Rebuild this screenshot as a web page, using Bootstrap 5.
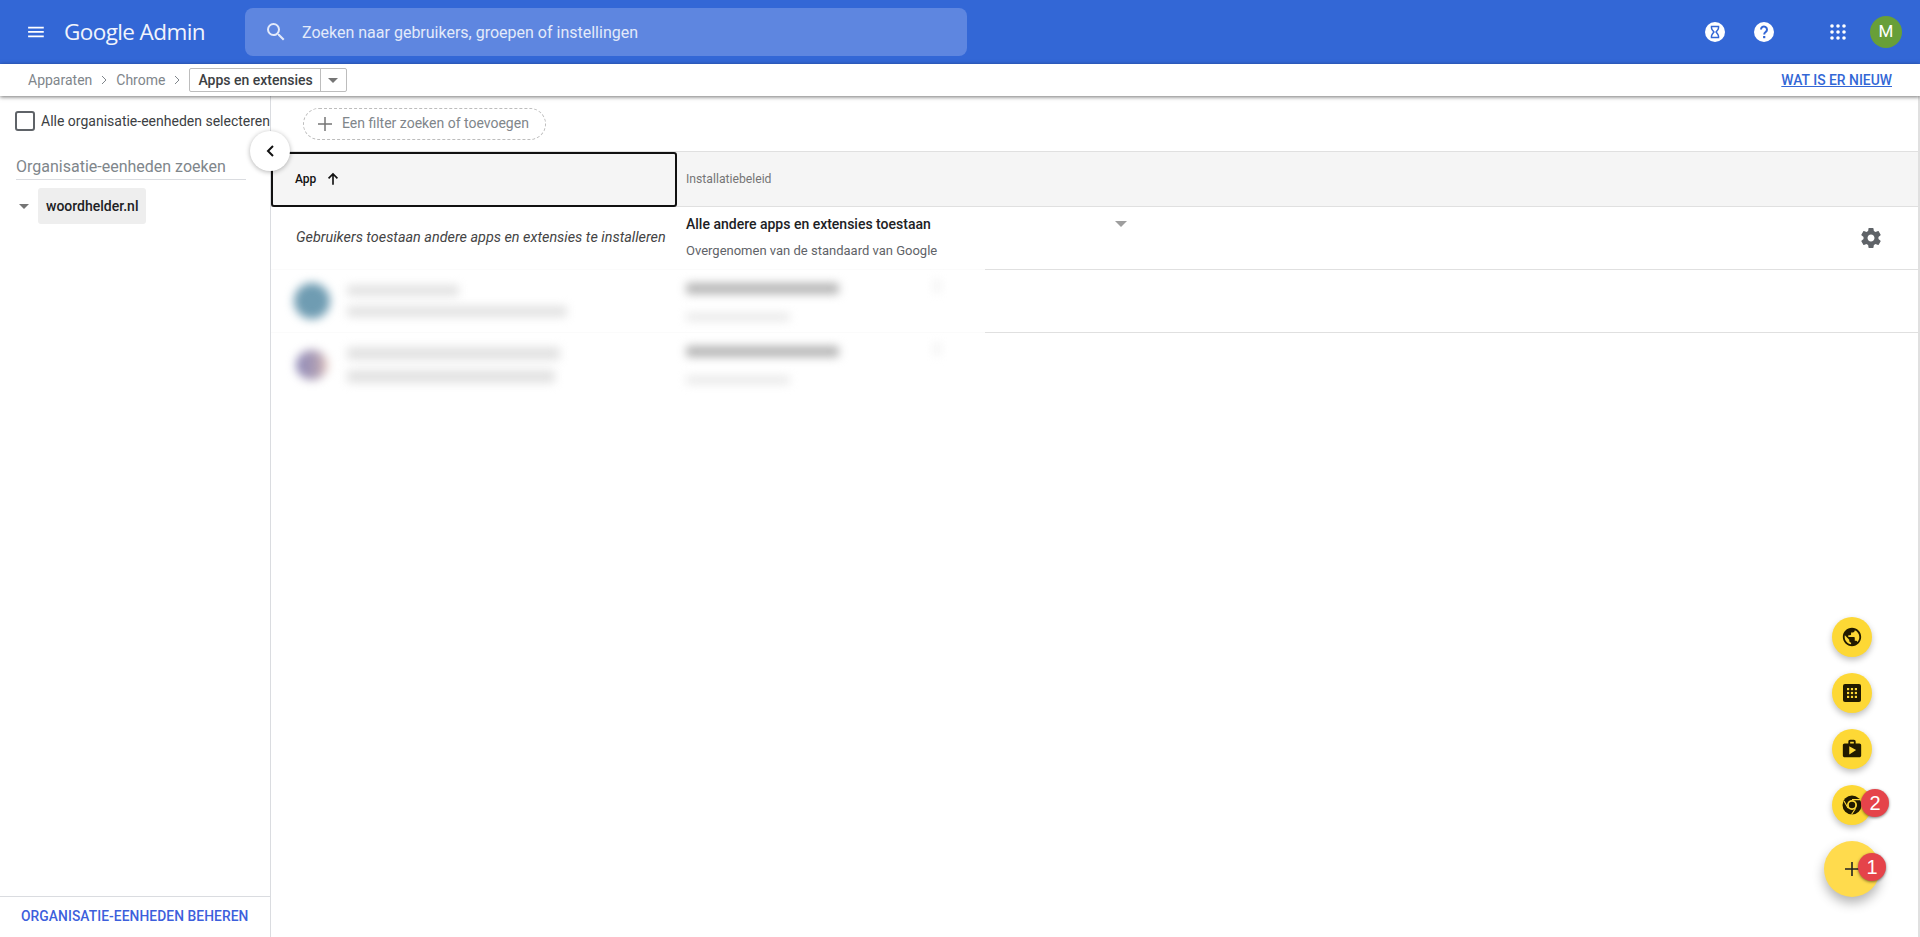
<!DOCTYPE html>
<html lang="nl">
<head>
<meta charset="utf-8">
<title>Google Admin</title>
<link href="https://cdn.jsdelivr.net/npm/bootstrap@5.3.0/dist/css/bootstrap.min.css" rel="stylesheet">
<style>
html,body{height:937px;overflow:hidden}
body{font-family:Roboto,"Liberation Sans",sans-serif;background:#fff;color:#202124}
.topbar{height:64px;background:#3367d6;color:#fff}
.menu-btn{width:64px;flex:none}
.brand{font-family:"Open Sans",Roboto,sans-serif;font-size:22.5px;width:181px;letter-spacing:-.6px;color:#f1f4fc;flex:none}
.searchbox{width:722px;height:48px;background:#5e86e0;border-radius:8px;color:#e3eafa;font-size:16px;flex:none}
.searchbox span{padding-top:1px}
.searchbox svg{margin:0 14px 0 19px}
.top-actions{margin-right:18px}
.act-a{margin-right:29px}.act-b{margin-right:56px}.act-c{margin-right:24px}
.avatar{width:32px;height:32px;background:#689f38;color:#fff;font-size:17px}
.subbar{height:32px;background:#fff;box-shadow:0 1px 4px rgba(0,0,0,.55);position:relative;z-index:2;padding-left:28px;font-size:14px;color:#80868b}
.sep{margin:0 9px;font-size:13px}
.crumb-box{height:24px;border:1px solid #bdbdbd;border-radius:2px;color:#3c4043;font-weight:500;font-size:14px}
.crumb-label{padding:0 7px 0 8px;border-right:1px solid #bdbdbd;height:100%}
.crumb-caret{width:25px;position:relative}
.tri{width:0;height:0;border-left:5px solid transparent;border-right:5px solid transparent;border-top:5px solid #757575;display:block}
.whatsnew{margin-right:28px;color:#3367d6;font-size:13.9px;font-weight:500;padding-top:1px}
.workarea{height:841px;position:relative}
.sidepane{width:271px;flex:none;border-right:1px solid #dadce0;height:841px}
.select-all{padding:15px 0 0 15px;font-size:14px;color:#3c4043;white-space:nowrap;height:55px}
.box-check{width:20px;height:20px;border:2px solid #5f6368;border-radius:3px;margin-right:6px;flex:none}
.ou-search{margin:0 24px 0 16px;height:29px;border-bottom:1px solid #dadce0;color:#80868b;font-size:16px;white-space:nowrap;padding-top:4px}
.ou-row{padding:8px 0 0 19px}
.ou-chip{margin-left:9px;width:108px;height:36px;background:#eee;border-radius:3px;padding-left:8px;font-size:14px;font-weight:500;line-height:36px}
.ou-foot{height:41px;margin-top:auto;border-top:1px solid #dadce0;color:#3d5fdc;font-size:13.8px;font-weight:500;padding:0 0 2px 21px;letter-spacing:.08px}
.mainpane{border-right:2px solid #e0e0e0}
.filterrow{height:55px;padding-left:32px}
.filterpill{width:243px;height:32px;border:1px dashed #bdbdbd;border-radius:16px;color:#80868b;font-size:14px;padding-left:13px}
.filterpill svg{margin-right:9px}
.thead-row{height:56px;background:#f5f5f5;border-top:1px solid #e0e0e0;border-bottom:1px solid #e0e0e0}
.col-app{width:406px;flex:none}
.th-app{height:55px;border:2px solid #111;border-radius:3px;font-size:12px;font-weight:500;color:#111;padding:0 0 2px 22px;background:#f5f5f5;position:relative}
.th-app svg{margin-left:10px}
.th-policy{padding-left:9px;font-size:12.2px;color:#757575}
.rowline{height:63px;border-bottom:1px solid #e0e0e0;position:relative}
.rowline-last{border-bottom:0}
.cell-inherit{font-style:italic;font-size:14.4px;color:#444;padding-left:25px;white-space:nowrap}
.policy-cell{padding:6px 0 0 9px;width:442px;position:relative}
.policy-main{font-size:14px;font-weight:500;color:#202124;line-height:20px;padding-top:1px}
.policy-sub{font-size:13px;color:#5f6368;line-height:16px;margin-top:9px}
.policy-tri{position:absolute;right:-8px;top:14px;border-left-width:6px;border-right-width:6px;border-top-width:6px;border-top-color:#9e9e9e}
.gear{margin-left:auto;margin-right:35px}
.veil{position:absolute;left:271px;top:167px;width:714px;height:170px;background:rgba(255,255,255,.85);z-index:0;pointer-events:none}
.over-veil{position:relative;z-index:1}
.blur-cell{padding:0;width:442px}
.smudge{border-radius:3px;filter:blur(5px);background:#e2e2e2}
.smudge-strong{background:#b4b4b4}
.smudge-pale{background:#e8e8e8}
.smudge-tick{background:#f0f0f0;width:6px;height:14px;position:absolute;left:257px;top:9px}
.dot-a{width:36px;height:36px;border-radius:50%;background:#6f9cb2;filter:blur(5px);margin:0 17px 0 23px;flex:none}
.dot-b{width:32px;height:30px;border-radius:50%;background:linear-gradient(90deg,#8d88b8,#b0a0b4 70%,#f0cfc0);filter:blur(5px);margin:0 19px 0 25px;flex:none}
.fabs{position:absolute;right:48px;top:521px;gap:16px;z-index:3}
.fabmini{width:40px;height:40px;background:#fdd835;box-shadow:0 3px 6px rgba(0,0,0,.25);position:relative}
.fabbig{width:56px;height:56px;background:#ffdb4d;box-shadow:0 6px 12px rgba(0,0,0,.3);position:relative;margin:0 -8px}
.notif{position:absolute;width:28px;height:28px;background:#e5434a;color:#fff;font-size:20px;box-shadow:0 1px 3px rgba(0,0,0,.5);font-family:"Liberation Sans",sans-serif}
.notif-two{left:29px;top:4px}
.notif-one{left:34px;top:12px}
.collapse-btn{position:absolute;left:250px;top:35px;width:40px;height:40px;background:#fff;box-shadow:0 1px 5px rgba(0,0,0,.3);z-index:3}
</style>
</head>
<body>
<div class="topbar d-flex align-items-center">
  <div class="menu-btn d-flex justify-content-center"><svg width="24" height="24" viewBox="0 0 24 24" fill="#fff" style="margin-left:8px"><path d="M3 18h18v-2H3v2zm0-5h18v-2H3v2zm0-7v2h18V6H3z" transform="translate(1.5 1.5) scale(.87)"/></svg></div>
  <div class="brand">Google Admin</div>
  <div class="searchbox d-flex align-items-center">
    <svg width="24" height="24" viewBox="0 0 24 24" fill="#e3eafa"><path d="M15.5 14h-.79l-.28-.27A6.47 6.47 0 0 0 16 9.5 6.5 6.5 0 1 0 9.5 16c1.61 0 3.09-.59 4.23-1.57l.27.28v.79l5 4.99L20.49 19l-4.99-5zm-6 0C7 14 5 12 5 9.5S7 5 9.5 5 14 7 14 9.5 12 14 9.5 14z"/></svg>
    <span>Zoeken naar gebruikers, groepen of instellingen</span>
  </div>
  <div class="top-actions ms-auto d-flex align-items-center">
    <svg class="act-a" width="20" height="20" viewBox="0 0 20 20"><circle cx="10" cy="10" r="10" fill="#fff"/><path d="M6.5 4.5h7v1.5c0 1.6-1.6 3-2.4 4 .8 1 2.4 2.400 2.400 4v1.500h-7V14c0-1.600 1.600-3 2.400-4-.8-1-2.400-2.400-2.400-4z" fill="none" stroke="#3367d6" stroke-width="1.500"/></svg>
    <svg class="act-b" width="20" height="20" viewBox="0 0 20 20"><circle cx="10" cy="10" r="10" fill="#fff"/><path d="M7 7.500a3 3 0 1 1 4.800 2.400c-1 .8-1.600 1.200-1.600 2.600" fill="none" stroke="#3367d6" stroke-width="2"/><rect x="9.100" y="14" width="2.200" height="2.200" fill="#3367d6"/></svg>
    <svg class="act-c" width="16" height="16" viewBox="0 0 16 16" fill="#fff"><circle cx="2" cy="2" r="1.800"/><circle cx="8" cy="2" r="1.800"/><circle cx="14" cy="2" r="1.800"/><circle cx="2" cy="8" r="1.800"/><circle cx="8" cy="8" r="1.800"/><circle cx="14" cy="8" r="1.800"/><circle cx="2" cy="14" r="1.800"/><circle cx="8" cy="14" r="1.800"/><circle cx="14" cy="14" r="1.800"/></svg>
    <div class="avatar rounded-circle d-flex align-items-center justify-content-center">M</div>
  </div>
</div>
<div class="subbar d-flex align-items-center">
  <span>Apparaten</span>
  <svg class="sep" width="6" height="10" viewBox="0 0 6 10"><path d="M1 1l4 4-4 4" fill="none" stroke="#80868b"/></svg>
  <span>Chrome</span>
  <svg class="sep" width="6" height="10" viewBox="0 0 6 10"><path d="M1 1l4 4-4 4" fill="none" stroke="#80868b"/></svg>
  <div class="crumb-box d-flex align-items-center">
    <div class="crumb-label d-flex align-items-center">Apps en extensies</div>
    <div class="crumb-caret d-flex align-items-center justify-content-center"><span class="tri"></span></div>
  </div>
  <a href="#" class="whatsnew ms-auto">WAT IS ER NIEUW</a>
</div>
<div class="workarea d-flex">
  <aside class="sidepane d-flex flex-column">
    <div class="select-all d-flex"><span class="box-check"></span><span>Alle organisatie-eenheden selecteren</span></div>
    <div class="ou-search">Organisatie-eenheden zoeken</div>
    <div class="ou-row d-flex align-items-center">
      <span class="tri"></span>
      <div class="ou-chip">woordhelder.nl</div>
    </div>
    <div class="ou-foot d-flex align-items-center">ORGANISATIE-EENHEDEN BEHEREN</div>
  </aside>
  <button class="collapse-btn rounded-circle border-0 d-flex align-items-center justify-content-center p-0" aria-label="Inklappen"><svg width="10" height="14" viewBox="0 0 10 14"><path d="M8 2L3 7l5 5" fill="none" stroke="#111" stroke-width="2"/></svg></button>
  <main class="mainpane flex-grow-1">
    <div class="filterrow d-flex align-items-center">
      <div class="filterpill d-flex align-items-center">
        <svg width="16" height="16" viewBox="0 0 16 16"><path d="M8 1v14M1 8h14" stroke="#757575" stroke-width="1.500"/></svg>
        Een filter zoeken of toevoegen
      </div>
    </div>
    <div class="thead-row d-flex">
      <div class="col-app th-app d-flex align-items-center">App
        <svg width="14" height="14" viewBox="0 0 12 12"><path d="M6 11V2M2.200 5.500L6 1.700l3.800 3.800" fill="none" stroke="#111" stroke-width="1.400"/></svg>
      </div>
      <div class="th-policy d-flex align-items-center">Installatiebeleid</div>
    </div>
    <div class="rowline d-flex align-items-center">
      <div class="col-app cell-inherit">Gebruikers toestaan andere apps en extensies te installeren</div>
      <div class="policy-cell align-self-start">
        <div class="policy-main">Alle andere apps en extensies toestaan</div>
        <div class="policy-sub">Overgenomen van de standaard van Google</div>
        <span class="tri policy-tri"></span>
      </div>
      <svg class="gear" width="24" height="24" viewBox="0 0 24 24" fill="#5f6368"><path d="M19.430 12.980c.04-.32.07-.64.07-.98s-.03-.66-.07-.98l2.110-1.650c.19-.15.24-.42.12-.64l-2-3.460c-.12-.22-.39-.3-.61-.22l-2.490 1c-.52-.4-1.080-.73-1.690-.98l-.38-2.650A.488.488 0 0 0 14 2h-4c-.25 0-.46.18-.49.42l-.38 2.650c-.61.25-1.170.59-1.690.98l-2.490-1c-.23-.09-.49 0-.61.22l-2 3.460c-.13.22-.07.49.12.64l2.110 1.650c-.04.32-.07.65-.07.98s.03.66.07.98l-2.110 1.650c-.19.15-.24.42-.12.64l2 3.460c.12.22.39.3.61.22l2.490-1c.52.4 1.080.73 1.690.98l.38 2.650c.03.24.24.42.49.42h4c.25 0 .46-.18.49-.42l.38-2.650c.61-.25 1.170-.59 1.690-.98l2.490 1c.23.09.49 0 .61-.22l2-3.460c.12-.22.07-.49-.12-.64l-2.110-1.650zM12 15.500c-1.930 0-3.500-1.570-3.500-3.500s1.570-3.500 3.500-3.500 3.500 1.570 3.500 3.500-1.570 3.500-3.500 3.500z"/></svg>
    </div>
    <div class="rowline d-flex align-items-center">
      <div class="col-app d-flex align-items-center over-veil">
        <div class="dot-a"></div>
        <div class="d-flex flex-column" style="gap:10px"><div class="smudge" style="width:112px;height:11px"></div><div class="smudge" style="width:220px;height:11px"></div></div>
      </div>
      <div class="over-veil blur-cell align-self-start d-flex flex-column" style="padding:13px 0 0 9px;gap:19px">
        <div class="smudge smudge-strong" style="width:153px;height:11px"></div>
        <div class="smudge smudge-pale" style="width:104px;height:8px"></div>
        <div class="smudge smudge-tick"></div>
      </div>
    </div>
    <div class="rowline rowline-last d-flex align-items-center">
      <div class="col-app d-flex align-items-center over-veil">
        <div class="dot-b"></div>
        <div class="d-flex flex-column" style="gap:10px"><div class="smudge" style="width:213px;height:13px"></div><div class="smudge" style="width:208px;height:13px"></div></div>
      </div>
      <div class="over-veil blur-cell align-self-start d-flex flex-column" style="padding:13px 0 0 9px;gap:19px">
        <div class="smudge smudge-strong" style="width:153px;height:11px"></div>
        <div class="smudge smudge-pale" style="width:104px;height:8px"></div>
        <div class="smudge smudge-tick"></div>
      </div>
    </div>
  </main>
  <div class="veil"></div>
  <div class="fabs d-flex flex-column align-items-center">
    <div class="fabmini rounded-circle d-flex align-items-center justify-content-center">
      <svg width="22" height="22" viewBox="0 0 24 24" fill="#211a00"><path d="M12 2C6.480 2 2 6.480 2 12s4.480 10 10 10 10-4.480 10-10S17.520 2 12 2zm-1 17.930c-3.950-.49-7-3.850-7-7.930 0-.62.08-1.210.21-1.790L9 15v1c0 1.100.9 2 2 2v1.930zm6.900-2.540c-.26-.81-1-1.390-1.900-1.390h-1v-3c0-.55-.45-1-1-1H8v-2h2c.55 0 1-.45 1-1V7h2c1.100 0 2-.9 2-2v-.41c2.930 1.190 5 4.060 5 7.410 0 2.080-.8 3.970-2.100 5.390z"/></svg>
    </div>
    <div class="fabmini rounded-circle d-flex align-items-center justify-content-center">
      <svg width="20" height="20" viewBox="0 0 20 20"><rect x="1" y="1" width="18" height="18" rx="2" fill="#211a00"/><g fill="#fdd835"><rect x="5" y="5" width="2.200" height="2.200"/><rect x="8.900" y="5" width="2.200" height="2.200"/><rect x="12.800" y="5" width="2.200" height="2.200"/><rect x="5" y="8.900" width="2.200" height="2.200"/><rect x="8.900" y="8.900" width="2.200" height="2.200"/><rect x="12.800" y="8.900" width="2.200" height="2.200"/><rect x="5" y="12.800" width="2.200" height="2.200"/><rect x="8.900" y="12.800" width="2.200" height="2.200"/><rect x="12.800" y="12.800" width="2.200" height="2.200"/></g></svg>
    </div>
    <div class="fabmini rounded-circle d-flex align-items-center justify-content-center">
      <svg width="22" height="22" viewBox="0 0 24 24" fill="#211a00"><path d="M20 6h-4V4c0-1.110-.89-2-2-2h-4c-1.110 0-2 .89-2 2v2H4c-1.110 0-2 .89-2 2v11c0 1.110.89 2 2 2h16c1.110 0 2-.89 2-2V8c0-1.110-.89-2-2-2zM10 4h4v2h-4V4zM9 18V9l7.500 4L9 18z"/></svg>
    </div>
    <div class="fabmini rounded-circle d-flex align-items-center justify-content-center">
      <svg width="20" height="20" viewBox="0 0 20 20"><circle cx="10" cy="10" r="9.500" fill="#211a00"/><circle cx="10" cy="10" r="5" fill="#fdd835"/><circle cx="10" cy="10" r="3.200" fill="#211a00"/><path d="M10 4.600h9M6 13l-4-7M13.500 13.500L9.500 19.500" stroke="#fdd835" stroke-width="1.100" fill="none"/></svg>
      <div class="notif notif-two rounded-circle d-flex align-items-center justify-content-center">2</div>
    </div>
    <div class="fabbig rounded-circle d-flex align-items-center justify-content-center">
      <svg width="14" height="14" viewBox="0 0 14 14"><path d="M7 0v14M0 7h14" stroke="#222" stroke-width="1.600"/></svg>
      <div class="notif notif-one rounded-circle d-flex align-items-center justify-content-center">1</div>
    </div>
  </div>
</div>
</body>
</html>
